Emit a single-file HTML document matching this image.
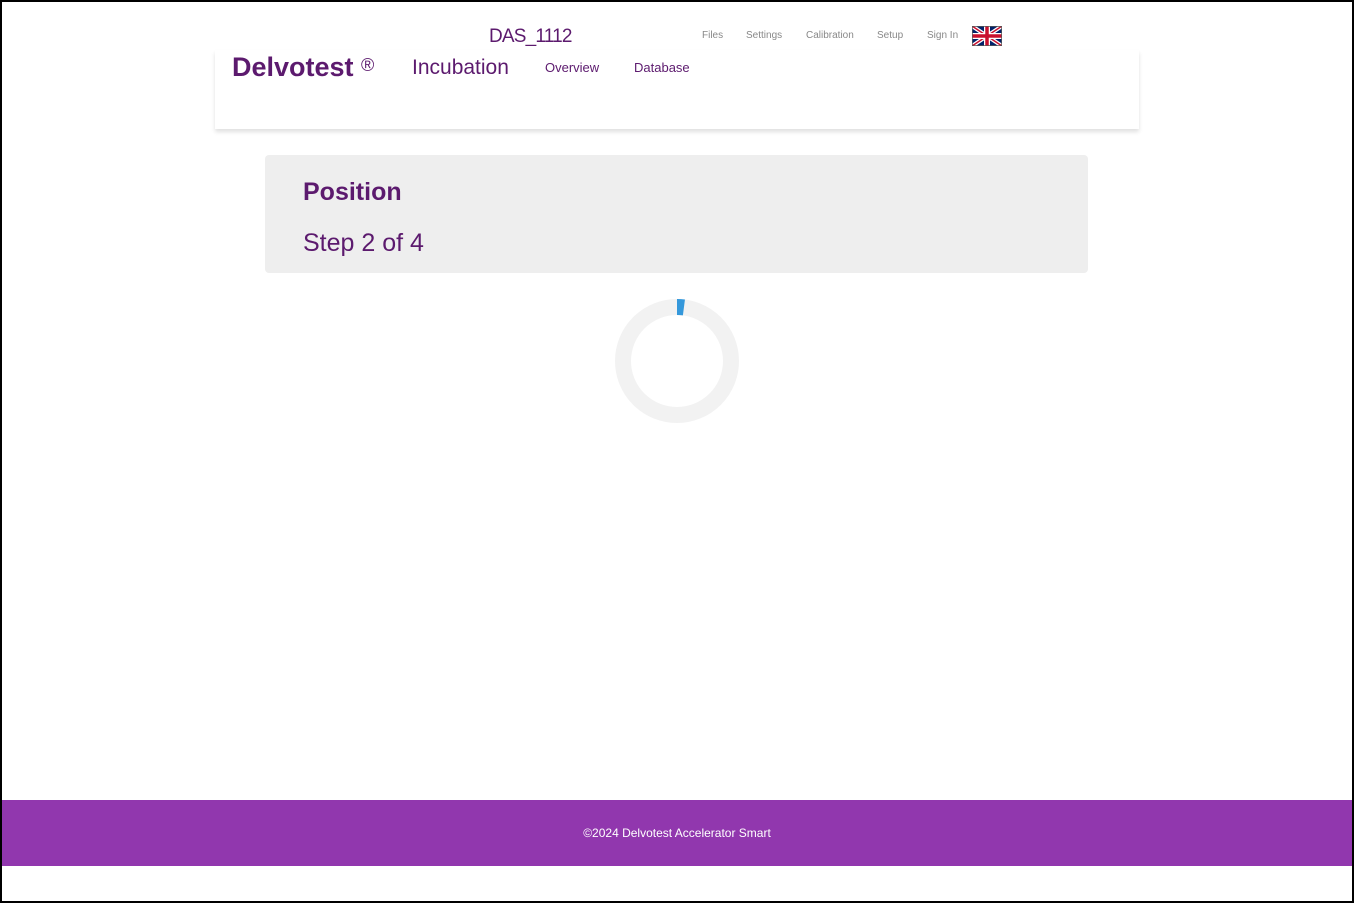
<!DOCTYPE html>
<html><head><meta charset="utf-8"><style>
html,body{margin:0;padding:0;}
body{width:1354px;height:903px;position:relative;overflow:hidden;background:#fff;font-family:"Liberation Sans",sans-serif;}
.frame{position:absolute;left:0;top:0;width:1350px;height:899px;border:2px solid #000;}
.hdr{position:absolute;left:215px;top:50px;width:924px;height:79px;background:#fff;box-shadow:0 3px 4px rgba(0,0,0,0.12);}
.t{position:absolute;color:#5c1a6e;white-space:nowrap;}
.sm{position:absolute;top:30px;font-size:10px;color:#888;}
.card{position:absolute;left:265px;top:155px;width:823px;height:118px;background:#eee;border-radius:4px;}
.foot{position:absolute;left:2px;top:800px;width:1350px;height:66px;background:#9137ae;color:#fff;font-size:12px;text-align:center;line-height:66px;}
</style></head><body>
<div class="frame"></div>
<div class="hdr"></div>
<div class="t" style="left:489px;top:26px;font-size:19px;letter-spacing:-0.8px;">DAS_1112</div>
<div class="sm" style="left:702px">Files</div>
<div class="sm" style="left:746px">Settings</div>
<div class="sm" style="left:806px">Calibration</div>
<div class="sm" style="left:877px">Setup</div>
<div class="sm" style="left:927px">Sign In</div>
<svg style="position:absolute;left:972px;top:26px" width="30" height="20" viewBox="0 0 60 40">
<rect width="60" height="40" fill="#012169"/>
<path d="M0,0L60,40M60,0L0,40" stroke="#fff" stroke-width="8"/>
<path d="M0,0L60,40M60,0L0,40" stroke="#C8102E" stroke-width="3"/>
<path d="M30,0V40M0,20H60" stroke="#fff" stroke-width="12"/>
<path d="M30,0V40M0,20H60" stroke="#C8102E" stroke-width="7"/>
<rect width="60" height="40" fill="none" stroke="#555" stroke-width="3"/>
</svg>
<div class="t" style="left:232px;top:52px;font-size:27px;font-weight:bold;">Delvotest</div>
<div class="t" style="left:361px;top:55px;font-size:18px;">®</div>
<div class="t" style="left:412px;top:56px;font-size:21px;">Incubation</div>
<div class="t" style="left:545px;top:60px;font-size:13px;">Overview</div>
<div class="t" style="left:634px;top:60px;font-size:13px;">Database</div>
<div class="card"></div>
<div class="t" style="left:303px;top:178px;font-size:25px;font-weight:bold;">Position</div>
<div class="t" style="left:303px;top:229px;font-size:25px;">Step 2 of 4</div>
<svg style="position:absolute;left:607px;top:291px" width="140" height="140">
<circle cx="70" cy="70" r="54" fill="none" stroke="#f2f2f2" stroke-width="16"/>
<circle cx="70" cy="70" r="54" fill="none" stroke="#3498db" stroke-width="16" stroke-dasharray="7 400" transform="rotate(-90 70 70)"/>
</svg>
<div class="foot">©2024 Delvotest Accelerator Smart</div>
</body></html>
